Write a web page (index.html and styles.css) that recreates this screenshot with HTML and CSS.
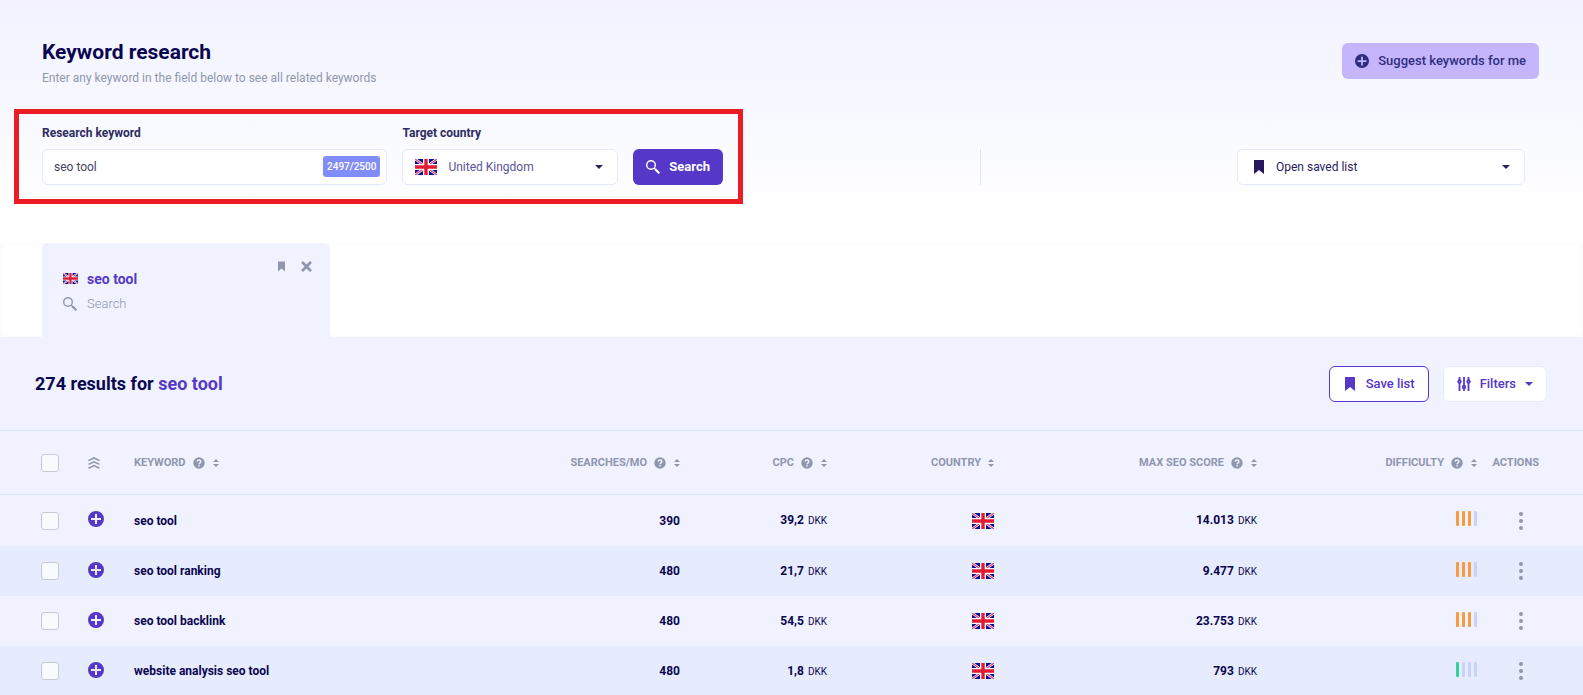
FILE: index.html
```html
<!DOCTYPE html>
<html lang="en">
<head>
    <meta charset="UTF-8">
    <meta name="viewport" content="width=device-width, initial-scale=1">
    <title>Keyword research</title>
    <link rel="stylesheet" href="styles.css">
</head>
<body>

    <!-- icons -->
    <svg class="sprite" aria-hidden="true">
        <symbol id="flag-uk" viewBox="0 0 22 16" preserveAspectRatio="none">
            <path fill="#0b0b9c" d="M0 0h22v16H0z"/>
            <path stroke="#fff" stroke-width="2.6" d="M0 0l22 16M22 0L0 16"/>
            <path stroke="#e0455f" stroke-width="1.2" d="M0 0l22 16M22 0L0 16"/>
            <path fill="#fff" d="M8 0h6v16H8zM0 5h22v6H0z"/>
            <path fill="#df1b36" d="M9.300 0h3.400v16H9.300zM0 6.300h22v3.400H0z"/>
        </symbol>
        <symbol id="search" viewBox="0 0 14 14">
            <circle cx="5" cy="5" r="4.3" fill="none" stroke="currentColor" stroke-width="1.4"/>
            <path stroke="currentColor" stroke-width="1.4" d="M8 8l2 2"/>
            <path stroke="currentColor" stroke-width="2.2" d="M9.3 9.3l4 4"/>
        </symbol>
        <symbol id="bookmark" viewBox="0 0 10 14">
            <path fill="currentColor" d="M0 0h10v14l-5-4-5 4z"/>
        </symbol>
        <symbol id="caret" viewBox="0 0 8 4">
            <path fill="currentColor" d="M0 0h8L4 4z"/>
        </symbol>
        <symbol id="plus" viewBox="0 0 16 16">
            <path fill="currentColor" fill-rule="evenodd" d="M8 0a8 8 0 100 16A8 8 0 008 0zM7 3h2v4h4v2H9v4H7V9H3V7h4z"/>
        </symbol>
        <symbol id="close" viewBox="0 0 12 12">
            <path stroke="currentColor" stroke-width="3" stroke-linecap="round" d="M2 2l8 8M10 2l-8 8"/>
        </symbol>
        <symbol id="sliders" viewBox="0 0 13 14">
            <g fill="none" stroke="currentColor" stroke-width="1.8">
                <path d="M2 0v3M2 6v8M6.500 0v8M6.500 12v2M11 0v3M11 6v8"/>
                <circle cx="2" cy="4.500" r="1.300"/>
                <circle cx="6.500" cy="10" r="1.300"/>
                <circle cx="11" cy="4.500" r="1.300"/>
            </g>
        </symbol>
        <symbol id="levels" viewBox="0 0 12 12">
            <path fill="none" stroke="currentColor" stroke-width="1.600" d="M.5 3.600L6 1l5.500 2.600M.5 7.400L6 4.800l5.500 2.600M.5 11.200L6 8.600l5.500 2.600"/>
        </symbol>
        <symbol id="help" viewBox="0 0 12 12">
            <circle cx="6" cy="6" r="5.700" fill="currentColor"/>
            <path fill="none" stroke="#f0f2ff" stroke-width="1.400" d="M4.200 4.700C4.300 2.400 7.900 2.400 7.900 4.600 7.900 5.900 6.100 5.700 6.100 7.200M6.100 8.100v1.400"/>
        </symbol>
        <symbol id="sort" viewBox="0 0 6 8">
            <path fill="currentColor" d="M3 0l3 3H0zM3 8l3-3H0z"/>
        </symbol>
        <symbol id="dots" viewBox="0 0 4 18">
            <g fill="currentColor"><circle cx="2" cy="2" r="2"/><circle cx="2" cy="9" r="2"/><circle cx="2" cy="16" r="2"/></g>
        </symbol>
    </svg>

    <header class="top">
        <div class="top-head">
            <div>
                <h1>Keyword research</h1>
                <p class="subtitle">Enter any keyword in the field below to see all related keywords</p>
            </div>
            <button type="button" class="btn btn-suggest">
                <svg class="icon-14"><use href="#plus"/></svg>
                Suggest keywords for me
            </button>
        </div>

        <div class="top-tools">
            <form class="search-form">
                <div class="field field-keyword">
                    <label for="keyword">Research keyword</label>
                    <div class="control">
                        <input type="text" id="keyword" value="seo tool">
                        <span class="quota">2497/2500</span>
                    </div>
                </div>
                <div class="field field-country">
                    <label for="country">Target country</label>
                    <div class="control">
                        <svg class="flag control-icon"><use href="#flag-uk"/></svg>
                        <select id="country">
                            <option>United Kingdom</option>
                        </select>
                        <svg class="caret control-caret"><use href="#caret"/></svg>
                    </div>
                </div>
                <button type="button" class="btn btn-search">
                    <svg class="icon-14"><use href="#search"/></svg>
                    Search
                </button>
            </form>

            <div class="divider"></div>

            <div class="control saved">
                <svg class="bookmark control-icon"><use href="#bookmark"/></svg>
                <select aria-label="Open saved list">
                    <option>Open saved list</option>
                </select>
                <svg class="caret control-caret"><use href="#caret"/></svg>
            </div>
        </div>
    </header>

    <nav class="tabs">
        <div class="tab">
            <div class="tab-info">
                <svg class="flag-small"><use href="#flag-uk"/></svg>
                <a href="#results" class="tab-name">seo tool</a>
                <svg class="icon-14"><use href="#search"/></svg>
                <span class="tab-type">Search</span>
            </div>
            <div class="tab-actions">
                <button type="button" aria-label="Save"><svg class="tab-bookmark"><use href="#bookmark"/></svg></button>
                <button type="button" aria-label="Close"><svg class="tab-close"><use href="#close"/></svg></button>
            </div>
        </div>
    </nav>

    <main id="results" class="results">
        <div class="results-head">
            <h2>274 results for <span>seo tool</span></h2>
            <div class="results-actions">
                <button type="button" class="btn btn-save">
                    <svg class="bookmark"><use href="#bookmark"/></svg>
                    Save list
                </button>
                <button type="button" class="btn btn-filters">
                    <svg class="icon-14"><use href="#sliders"/></svg>
                    Filters
                    <svg class="caret"><use href="#caret"/></svg>
                </button>
            </div>
        </div>

        <table>
            <colgroup>
                <col class="col-check">
                <col class="col-add">
                <col class="col-keyword">
                <col class="col-searches">
                <col class="col-cpc">
                <col class="col-country">
                <col class="col-score">
                <col class="col-difficulty">
                <col class="col-actions">
            </colgroup>
            <thead>
                <tr>
                    <th class="check"><input type="checkbox" aria-label="Select all"></th>
                    <th class="left"><svg class="levels"><use href="#levels"/></svg></th>
                    <th class="left">KEYWORD<svg class="help"><use href="#help"/></svg><svg class="sort"><use href="#sort"/></svg></th>
                    <th>SEARCHES/MO<svg class="help"><use href="#help"/></svg><svg class="sort"><use href="#sort"/></svg></th>
                    <th>CPC<svg class="help"><use href="#help"/></svg><svg class="sort"><use href="#sort"/></svg></th>
                    <th>COUNTRY<svg class="sort"><use href="#sort"/></svg></th>
                    <th>MAX SEO SCORE<svg class="help"><use href="#help"/></svg><svg class="sort"><use href="#sort"/></svg></th>
                    <th>DIFFICULTY<svg class="help"><use href="#help"/></svg><svg class="sort"><use href="#sort"/></svg></th>
                    <th class="actions">ACTIONS</th>
                </tr>
            </thead>
            <tbody>
                <tr>
                    <td class="check"><input type="checkbox" aria-label="Select seo tool"></td>
                    <td class="left"><button type="button" class="add" aria-label="Add"><svg><use href="#plus"/></svg></button></td>
                    <td class="left">seo tool</td>
                    <td>390</td>
                    <td>39,2 <small>DKK</small></td>
                    <td><svg class="flag"><use href="#flag-uk"/></svg></td>
                    <td>14.013 <small>DKK</small></td>
                    <td><div class="bars hard"><i></i><i></i><i></i><i></i></div></td>
                    <td class="actions"><button type="button" class="more" aria-label="More"><svg><use href="#dots"/></svg></button></td>
                </tr>
                <tr>
                    <td class="check"><input type="checkbox" aria-label="Select seo tool ranking"></td>
                    <td class="left"><button type="button" class="add" aria-label="Add"><svg><use href="#plus"/></svg></button></td>
                    <td class="left">seo tool ranking</td>
                    <td>480</td>
                    <td>21,7 <small>DKK</small></td>
                    <td><svg class="flag"><use href="#flag-uk"/></svg></td>
                    <td>9.477 <small>DKK</small></td>
                    <td><div class="bars hard"><i></i><i></i><i></i><i></i></div></td>
                    <td class="actions"><button type="button" class="more" aria-label="More"><svg><use href="#dots"/></svg></button></td>
                </tr>
                <tr>
                    <td class="check"><input type="checkbox" aria-label="Select seo tool backlink"></td>
                    <td class="left"><button type="button" class="add" aria-label="Add"><svg><use href="#plus"/></svg></button></td>
                    <td class="left">seo tool backlink</td>
                    <td>480</td>
                    <td>54,5 <small>DKK</small></td>
                    <td><svg class="flag"><use href="#flag-uk"/></svg></td>
                    <td>23.753 <small>DKK</small></td>
                    <td><div class="bars hard"><i></i><i></i><i></i><i></i></div></td>
                    <td class="actions"><button type="button" class="more" aria-label="More"><svg><use href="#dots"/></svg></button></td>
                </tr>
                <tr>
                    <td class="check"><input type="checkbox" aria-label="Select website analysis seo tool"></td>
                    <td class="left"><button type="button" class="add" aria-label="Add"><svg><use href="#plus"/></svg></button></td>
                    <td class="left">website analysis seo tool</td>
                    <td>480</td>
                    <td>1,8 <small>DKK</small></td>
                    <td><svg class="flag"><use href="#flag-uk"/></svg></td>
                    <td>793 <small>DKK</small></td>
                    <td><div class="bars easy"><i></i><i></i><i></i><i></i></div></td>
                    <td class="actions"><button type="button" class="more" aria-label="More"><svg><use href="#dots"/></svg></button></td>
                </tr>
            </tbody>
        </table>
    </main>

</body>
</html>
```
FILE: styles.css
```css
*, *:after, *:before {
    box-sizing: border-box;
    margin: 0;
    padding: 0;
}

body {
    background: #fff;
    color: #0a0550;
    font-family: Roboto, "Liberation Sans", sans-serif;
    font-size: 13px;
    line-height: 16px;
}

button, input, select {
    font: inherit;
    color: inherit;
}

button {
    background: none;
    border: 0;
    cursor: pointer;
}

svg {
    display: block;
    flex: none;
}

.sprite {
    display: none;
}

/* icon sizes */
.icon-14 { width: 14px; height: 14px; }
.bookmark { width: 10px; height: 14px; }
.caret { width: 8px; height: 4px; }
.flag { width: 22px; height: 16px; }
.flag-small { width: 15px; height: 11px; }

.btn {
    display: flex;
    align-items: center;
    justify-content: center;
    height: 36px;
    padding: 0 13px;
    border-radius: 6px;
    font-weight: 500;
    white-space: nowrap;
}

/* top */
.top {
    height: 243px;
    padding-top: 38px;
    background: linear-gradient(#f0f2ff, #fff 220px);
}

.top-head {
    display: flex;
    justify-content: space-between;
    height: 71px;
    padding: 0 44px 0 42px;
}

h1 {
    font-size: 21px;
    line-height: 28px;
}

.subtitle {
    margin-top: 4px;
    color: #8f96ad;
    font-size: 12px;
}

.btn-suggest {
    gap: 9px;
    margin-top: 5px;
    background: #c4b5fd;
    color: #312e81;
}

.top-tools {
    display: flex;
    justify-content: space-between;
    padding: 0 58px 0 14px;
}

.search-form {
    display: flex;
    align-items: flex-end;
    gap: 15px;
    width: 729px;
    height: 95px;
    padding: 0 15px 14px 23px;
    border: 5px solid #ed1c24;
}

.field label {
    display: block;
    margin-bottom: 8px;
    color: #2d2b5f;
    font-size: 12px;
    font-weight: 700;
}

.field-keyword { flex: 8; }
.field-country { flex: 5; }

.control {
    position: relative;
}

.control input,
.control select {
    display: block;
    width: 100%;
    height: 36px;
    border: 1px solid #e4eafb;
    border-radius: 6px;
    background: #fff;
    font-size: 12px;
    appearance: none;
}

.control input {
    padding: 0 72px 0 11px;
    color: #43445f;
}

.control select {
    padding: 0 30px 0 45px;
    color: #5a559b;
}

.control-icon {
    position: absolute;
    top: 10px;
    left: 13px;
}

.control-caret {
    position: absolute;
    top: 16px;
    right: 15px;
    color: #28225f;
}

.quota {
    position: absolute;
    top: 7px;
    right: 7px;
    padding: 0 4px;
    border-radius: 3px;
    background: #818cf8;
    color: #fff;
    font-size: 10px;
    font-weight: 500;
    line-height: 21px;
}

.btn-search {
    gap: 9px;
    background: #5538c8;
    color: #fff;
    font-weight: 700;
}

.divider {
    width: 1px;
    height: 36px;
    margin: 40px 20px 0 0;
    background: #dfe3f3;
}

.saved {
    width: 288px;
    margin-top: 40px;
}

.saved select {
    padding-left: 38px;
    color: #28225f;
}

.saved .control-icon {
    top: 11px;
    left: 17px;
    color: #28195f;
}

/* tabs */
.tabs {
    padding: 0 42px;
    box-shadow: inset 0 0 4px #f6f7fe;
}

.tab {
    display: flex;
    justify-content: space-between;
    width: 288px;
    height: 94px;
    padding: 18px;
    border-radius: 6px 6px 0 0;
    background: #f0f2ff;
}

.tab-info {
    display: grid;
    grid-template-columns: 15px auto;
    grid-auto-rows: 25px;
    align-items: center;
    align-content: start;
    gap: 0 9px;
    padding: 5px 3px;
    color: #8f96ad;
    font-weight: 300;
}

.tab-name {
    color: #5538c8;
    font-size: 14px;
    font-weight: 700;
    text-decoration: none;
}

.tab-actions {
    display: flex;
    align-items: flex-start;
    gap: 16px;
    color: #8f96ad;
}

.tab-bookmark { width: 7px; height: 11px; }
.tab-close { width: 11px; height: 11px; }

/* results */
.results {
    background: #f0f2ff;
    color: #0a0550;
}

.results-head {
    display: flex;
    align-items: center;
    justify-content: space-between;
    height: 93px;
    padding: 1px 36px 0 35px;
}

h2 {
    font-size: 18px;
    font-weight: 700;
    line-height: 24px;
}

h2 span {
    color: #5538c8;
}

.results-actions {
    display: flex;
    gap: 14px;
}

.btn-save,
.btn-filters {
    border: 1px solid #5538c8;
    background: #fff;
    color: #5538c8;
}

.btn-save { gap: 11px; padding-left: 15px; }
.btn-filters { gap: 9px; border-color: #e8ebfd; }

table {
    width: 100%;
    border-collapse: separate;
    border-spacing: 0;
    table-layout: fixed;
}

.col-check { width: 88px; }
.col-add { width: 46px; }
.col-searches { width: 146px; }
.col-cpc { width: 147px; }
.col-country { width: 167px; }
.col-score { width: 263px; }
.col-difficulty { width: 220px; }
.col-actions { width: 106px; }

th {
    height: 65px;
    border: solid #dbe6fb;
    border-width: 1px 0;
    color: #8f96ad;
    font-size: 11px;
    font-weight: 700;
    text-align: right;
    white-space: nowrap;
}

td {
    height: 50px;
    font-size: 12px;
    font-weight: 700;
    text-align: right;
}

tbody tr:first-child td {
    height: 51px;
}

tbody tr:nth-child(even) {
    background: #e6ecfd;
}

.left { text-align: left; }

.check {
    padding: 0 0 0 41px;
    text-align: left;
}

.check input {
    display: block;
    width: 18px;
    height: 18px;
    border: 1px solid #c5c9d6;
    border-radius: 3px;
    background: #f8fbfe;
    appearance: none;
}

th svg,
td svg {
    display: inline-block;
    vertical-align: middle;
}

.help, .levels { width: 12px; height: 12px; }
.help { margin: 0 1px 0 7px; }
.sort { width: 6px; height: 8px; margin-left: 7px; }

.add {
    display: block;
}

.add svg {
    display: block;
    width: 16px;
    height: 16px;
    margin-bottom: 3px;
    color: #5538c8;
}

small {
    margin-left: 1px;
    font-size: 10px;
    font-weight: 400;
}

/* difficulty */
.bars {
    display: flex;
    justify-content: flex-end;
    gap: 3px;
    margin-bottom: 4px;
}

.bars i {
    width: 3px;
    height: 15px;
    border-radius: 1px;
    background: #c7d2fe;
}

.hard i:nth-child(-n+3) { background: #fb993c; }
.easy i:first-child { background: #34d399; }

.actions { padding-right: 44px; }
td.actions { padding: 0 60px 0 0; }

.more {
    display: block;
    margin-left: auto;
}

.more svg {
    display: block;
    width: 4px;
    height: 18px;
    color: #8f96ad;
}
```
